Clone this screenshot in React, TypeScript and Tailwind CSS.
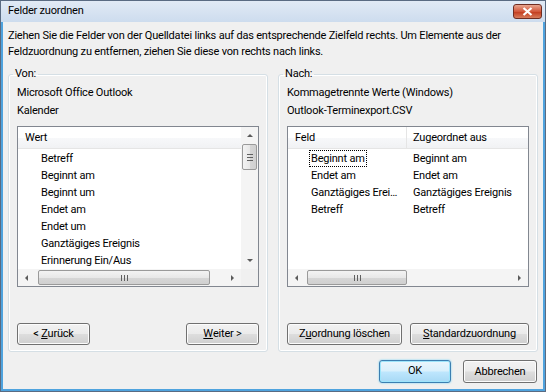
import React from 'react';

const btn =
  'h-[22px] rounded-[3px] border border-[#707070] bg-[linear-gradient(#f2f2f2_0%,#ebebeb_48%,#dddddd_52%,#cfcfcf_100%)] shadow-[inset_0_0_0_1px_#fcfcfc] leading-[20px] text-black flex items-center justify-center';

function Arrow({ dir }: { dir: 'up' | 'down' | 'left' | 'right' }) {
  const pts = {
    up: '1,5 4,2 7,5',
    down: '1,2 4,5 7,2',
    left: '5,1 2,4 5,7',
    right: '2,1 5,4 2,7',
  }[dir];
  return (
    <svg width="8" height="8" viewBox="0 0 8 8">
      <polygon points={pts} fill="#5b5b5b" />
    </svg>
  );
}

function HScroll({ gap, thumb }: { gap: string; thumb: string }) {
  return (
    <div className="h-[17px] w-full flex items-center bg-[#f4f4f4]">
      <div className="w-[17px] h-[17px] flex items-center justify-center">
        <Arrow dir="left" />
      </div>
      <div className={gap} />
      <div
        className={`h-[15px] rounded-[2px] border border-[#9a9a9a] bg-[linear-gradient(#f3f3f3,#e8e8e8_50%,#d6d6d6_52%,#d0d0d0)] flex items-center justify-center gap-[2px] ${thumb}`}
      >
        <span className="w-px h-[6px] bg-[#606060]" />
        <span className="w-px h-[6px] bg-[#606060]" />
        <span className="w-px h-[6px] bg-[#606060]" />
      </div>
      <div className="flex-1" />
      <div className="w-[17px] h-[17px] flex items-center justify-center">
        <Arrow dir="right" />
      </div>
    </div>
  );
}

function Row({ children }: { children: React.ReactNode }) {
  return <div className="h-[17px] leading-[17px] whitespace-nowrap">{children}</div>;
}

export default function App() {
  const leftItems = [
    'Betreff',
    'Beginnt am',
    'Beginnt um',
    'Endet am',
    'Endet um',
    'Ganztägiges Ereignis',
    'Erinnerung Ein/Aus',
  ];
  const mapped = [
    ['Beginnt am', 'Beginnt am'],
    ['Endet am', 'Endet am'],
    ['Ganztägiges Ereignis', 'Ganztägiges Ereignis'],
    ['Betreff', 'Betreff'],
  ];

  return (
    <div className="w-[546px] h-[392px] bg-[#5a6b82] p-px font-['Roboto',sans-serif] text-[11px] tracking-[-0.2px] text-black">
      <div className="w-full h-full flex flex-col bg-[#4fa3de]">
        {/* title bar */}
        <div className="h-[21px] relative flex items-center pl-[7px] bg-[linear-gradient(#e1eaf5,#cddcee)]">
          Felder zuordnen
          <div className="absolute right-[3px] top-[3px] w-[29px] h-[15px] rounded-[3px] border border-[#6f2d22] bg-[linear-gradient(#e8a58f,#d2583c_50%,#c23a1c_52%,#d77c5c)] flex items-center justify-center">
            <svg width="11" height="9" viewBox="0 0 11 9">
              <path d="M1.5 1 L9.5 8 M9.5 1 L1.5 8" stroke="#ffffff" strokeWidth="2.2" />
            </svg>
          </div>
        </div>

        {/* client */}
        <div className="flex-1 mx-[2px] mb-[2px] bg-[#f0f0f0] flex flex-col">
          <p className="pt-[6px] pl-[5px] pr-[6px] leading-[16px]">
            Ziehen Sie die Felder von der Quelldatei links auf das entsprechende Zielfeld rechts. Um Elemente aus der
            <br />
            Feldzuordnung zu entfernen, ziehen Sie diese von rechts nach links.
          </p>

          <div className="mt-[6px] ml-[5px] flex gap-[10px]">
            {/* Von */}
            <fieldset className="w-[260px] rounded-[3px] border border-[#d5dfe5] shadow-[inset_0_0_0_1px_#ffffff] px-[8px] pb-[6px]">
              <legend className="-ml-[4px] px-[2px] leading-[16px]">Von:</legend>
              <div className="mt-[2px] h-[18px] leading-[18px]">Microsoft Office Outlook</div>
              <div className="h-[18px] leading-[18px]">Kalender</div>
              <div className="mt-[6px] h-[161px] border border-[#828790] bg-white flex flex-col">
                <div className="flex flex-1 min-h-0">
                  <div className="flex-1 min-w-0 flex flex-col">
                    <div className="h-[22px] border-b border-[#e5e5e5] bg-[linear-gradient(#ffffff,#ffffff_50%,#f7f8fa_51%,#f1f2f4)] pl-[7px] leading-[22px]">
                      Wert
                    </div>
                    <div className="pt-[1px] pl-[23px]">
                      {leftItems.map((t) => (
                        <Row key={t}>{t}</Row>
                      ))}
                    </div>
                  </div>
                  <div className="w-[17px] bg-[#f4f4f4] flex flex-col items-center">
                    <div className="h-[17px] flex items-center justify-center">
                      <Arrow dir="up" />
                    </div>
                    <div className="w-[15px] h-[26px] rounded-[2px] border border-[#9a9a9a] bg-[linear-gradient(90deg,#f3f3f3,#e8e8e8_50%,#d6d6d6_52%,#d0d0d0)] flex flex-col items-center justify-center gap-[2px]">
                      <span className="h-px w-[6px] bg-[#606060]" />
                      <span className="h-px w-[6px] bg-[#606060]" />
                      <span className="h-px w-[6px] bg-[#606060]" />
                    </div>
                    <div className="flex-1" />
                    <div className="h-[17px] flex items-center justify-center">
                      <Arrow dir="down" />
                    </div>
                  </div>
                </div>
                <div className="flex">
                  <div className="flex-1">
                    <HScroll gap="w-[3px]" thumb="w-[172px]" />
                  </div>
                  <div className="w-[17px] h-[17px] bg-[#f0f0f0]" />
                </div>
              </div>
              <div className="mt-[36px] flex justify-between">
                <button className={`${btn} w-[73px]`}>
                  &lt;&nbsp;<span className="underline">Z</span>urück
                </button>
                <button className={`${btn} w-[73px]`}>
                  <span className="underline">W</span>eiter &gt;
                </button>
              </div>
            </fieldset>

            {/* Nach */}
            <fieldset className="w-[260px] rounded-[3px] border border-[#d5dfe5] shadow-[inset_0_0_0_1px_#ffffff] px-[8px] pb-[6px]">
              <legend className="-ml-[4px] px-[2px] leading-[16px]">Nach:</legend>
              <div className="mt-[2px] h-[18px] leading-[18px]">Kommagetrennte Werte (Windows)</div>
              <div className="h-[18px] leading-[18px]">Outlook-Terminexport.CSV</div>
              <div className="mt-[6px] h-[161px] border border-[#828790] bg-white flex flex-col">
                <div className="flex-1 min-h-0 flex flex-col">
                  <div className="h-[22px] border-b border-[#e5e5e5] bg-[linear-gradient(#ffffff,#ffffff_50%,#f7f8fa_51%,#f1f2f4)] flex leading-[22px]">
                    <div className="w-[119px] pl-[7px] border-r border-[#e5e5e5]">Feld</div>
                    <div className="pl-[6px]">Zugeordnet aus</div>
                  </div>
                  <div className="pt-[1px]">
                    {mapped.map(([a, b], i) => (
                      <div key={a} className="flex h-[17px] leading-[17px]">
                        <div className="w-[120px] pl-[21px] pr-[6px] flex">
                          <span
                            className={`px-[2px] truncate ${i === 0 ? 'outline outline-1 outline-dotted outline-[#000] -outline-offset-1' : ''}`}
                          >
                            {a}
                          </span>
                        </div>
                        <div className="pl-[5px] whitespace-nowrap">{b}</div>
                      </div>
                    ))}
                  </div>
                </div>
                <HScroll gap="w-[2px]" thumb="w-[100px]" />
              </div>
              <div className="mt-[36px] flex justify-between">
                <button className={`${btn} w-[115px]`}>
                  Z<span className="underline">u</span>ordnung löschen
                </button>
                <button className={`${btn} w-[119px]`}>
                  <span className="underline">S</span>tandardzuordnung
                </button>
              </div>
            </fieldset>
          </div>

          <div className="mt-[8px] pr-[6px] flex justify-end gap-[12px]">
            <button className="w-[72px] h-[23px] rounded-[3px] border border-[#3c7fb1] bg-[linear-gradient(#eaf6fd_0%,#d9f0fc_48%,#bee6fd_52%,#a7d9f5_100%)] shadow-[inset_0_0_0_1px_#9ee5fb,0_0_2px_#5fcdf5] flex items-center justify-center">
              OK
            </button>
            <button className={`${btn} w-[74px] h-[23px]`}>Abbrechen</button>
          </div>
        </div>
      </div>
    </div>
  );
}
